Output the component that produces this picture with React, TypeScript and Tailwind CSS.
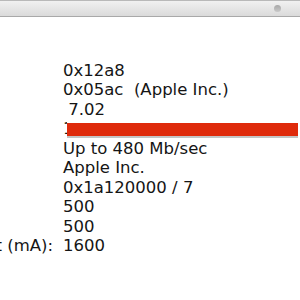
const ROWS: { label?: string; value: string; redacted?: boolean }[] = [
  { value: "0x12a8" },
  { value: "0x05ac\u00a0\u00a0(Apple Inc.)" },
  { value: "\u00a07.02" },
  { value: "1", redacted: true },
  { value: "Up to 480 Mb/sec" },
  { value: "Apple Inc." },
  { value: "0x1a120000 / 7" },
  { value: "500" },
  { value: "500" },
  { label: "Extra Operating Current (mA):", value: "1600" },
];

export default function App() {
  return (
    <div className="h-[300px] w-[300px] overflow-hidden bg-white">
      {/* window toolbar strip */}
      <div className="flex h-[17px] items-center justify-end border-t border-b border-t-[#b9b9b9] border-b-[#a9a9a9] bg-gradient-to-b from-[#f1f1f1] to-[#dadada] pr-[19px]">
        <div className="h-[7px] w-[7px] rounded-full bg-gradient-to-b from-[#a8a8a8] to-[#c8c8c8]" />
      </div>

      <div
        className="grid grid-cols-[63px_1fr] pt-[43.5px] text-[16.5px] leading-[19.5px] text-[#151515]"
        style={{ fontFamily: '"DejaVu Sans", sans-serif' }}
      >
        {ROWS.map((r, i) => (
          <div key={i} className="contents">
            <div className="flex justify-end overflow-hidden whitespace-nowrap pr-[10px]">
              {r.label}
            </div>
            {r.redacted ? (
              <div className="flex h-[19.5px] items-start">
                <span className="w-[4px] overflow-hidden">{r.value}</span>
                <div className="mt-[4px] mr-[2px] h-[15px] flex-1 border-b-2 border-[#c4c4c4] bg-[#df2a0b]" />
              </div>
            ) : (
              <div className="whitespace-pre">{r.value}</div>
            )}
          </div>
        ))}
      </div>
    </div>
  );
}
